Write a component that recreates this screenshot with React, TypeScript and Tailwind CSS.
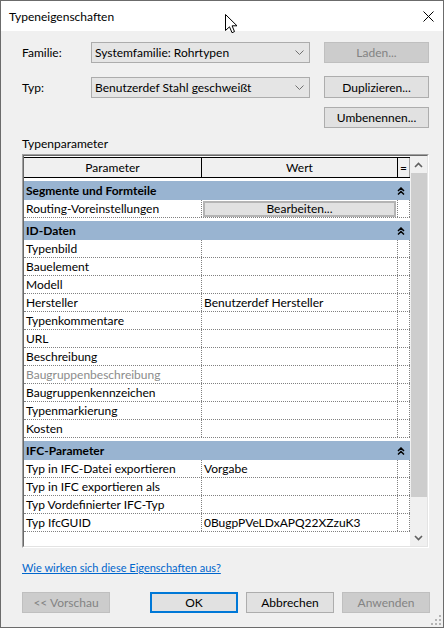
type Row = { name: string; value?: string; muted?: boolean; button?: string };
type Section = { title: string; rows: Row[] };

const sections: Section[] = [
  {
    title: "Segmente und Formteile",
    rows: [{ name: "Routing-Voreinstellungen", button: "Bearbeiten..." }],
  },
  {
    title: "ID-Daten",
    rows: [
      { name: "Typenbild" },
      { name: "Bauelement" },
      { name: "Modell" },
      { name: "Hersteller", value: "Benutzerdef Hersteller" },
      { name: "Typenkommentare" },
      { name: "URL" },
      { name: "Beschreibung" },
      { name: "Baugruppenbeschreibung", muted: true },
      { name: "Baugruppenkennzeichen" },
      { name: "Typenmarkierung" },
      { name: "Kosten" },
    ],
  },
  {
    title: "IFC-Parameter",
    rows: [
      { name: "Typ in IFC-Datei exportieren", value: "Vorgabe" },
      { name: "Typ in IFC exportieren als" },
      { name: "Typ Vordefinierter IFC-Typ" },
      { name: "Typ IfcGUID", value: "0BugpPVeLDxAPQ22XZzuK3" },
    ],
  },
];

function Btn({
  children,
  disabled,
  primary,
  className = "",
}: {
  children: React.ReactNode;
  disabled?: boolean;
  primary?: boolean;
  className?: string;
}) {
  const look = disabled
    ? "bg-[#cccccc] border border-[#bfbfbf] text-[#838383]"
    : primary
      ? "bg-[#e1e1e1] border-2 border-[#0078d7] text-black"
      : "bg-[#e1e1e1] border border-[#adadad] text-black";
  return (
    <div className={`h-[21px] flex items-center justify-center ${look} ${className}`}>{children}</div>
  );
}

function Combo({ text }: { text: string }) {
  return (
    <div className="w-[219px] h-[21px] bg-[#e5e5e5] border border-[#acacac] flex items-center justify-between pl-[3px] pr-[5px]">
      <span>{text}</span>
      <svg width="9" height="5" viewBox="0 0 9 5">
        <path d="M0.5 0.5 L4.5 4.5 L8.5 0.5" fill="none" stroke="#707070" strokeWidth="1" />
      </svg>
    </div>
  );
}

function Collapse() {
  return (
    <svg width="8" height="8" viewBox="0 0 8 8">
      <path d="M1 4 L4 1 L7 4 M1 7.5 L4 4.5 L7 7.5" fill="none" stroke="#000" strokeWidth="1.5" />
    </svg>
  );
}

function Chevron({ up }: { up?: boolean }) {
  return (
    <svg width="9" height="6" viewBox="0 0 9 6">
      <path
        d={up ? "M1 5 L4.5 1.5 L8 5" : "M1 1 L4.5 4.5 L8 1"}
        fill="none"
        stroke="#606060"
        strokeWidth="1.6"
      />
    </svg>
  );
}

function PropRow({ row }: { row: Row }) {
  return (
    <div className="flex h-[18px] border-b border-dotted border-[#808080] bg-white">
      <div
        className={`w-[178px] pl-[2px] flex items-center border-r border-dotted border-[#808080] ${
          row.muted ? "text-[#8c8c8c]" : "text-black"
        }`}
      >
        {row.name}
      </div>
      <div className="w-[196px] flex items-center border-r border-dotted border-[#808080]">
        {row.button ? (
          <div className="w-full h-[16px] mx-[1px] bg-[#e1e1e1] border-2 border-[#b4b4b4] flex items-center justify-center">
            {row.button}
          </div>
        ) : (
          <span className="pl-[2px]">{row.value}</span>
        )}
      </div>
      <div className="w-[12px] border-r border-dotted border-[#808080]" />
    </div>
  );
}

export default function App() {
  return (
    <div className="relative w-[444px] h-[628px] border border-[#6b6b6b] flex flex-col bg-[#f0f0f0] text-[12px] leading-[15px] text-black font-['Lato',sans-serif] overflow-hidden">
      {/* title bar */}
      <div className="h-[30px] bg-white flex items-center justify-between pl-[8px] pr-[9px]">
        <span>Typeneigenschaften</span>
        <svg width="11" height="11" viewBox="0 0 11 11">
          <path d="M0.5 0.5 L10.5 10.5 M10.5 0.5 L0.5 10.5" stroke="#000" strokeWidth="1" />
        </svg>
      </div>

      {/* mouse pointer */}
      <svg className="absolute left-[224px] top-[13px]" width="13" height="20" viewBox="0 0 13 20">
        <path
          d="M0.5 0.5 L0.5 16.5 L4.5 12.8 L7 18.7 L9.5 17.6 L7.1 11.8 L12 11.8 Z"
          fill="#fff"
          stroke="#000"
          strokeWidth="1"
          strokeLinejoin="round"
        />
      </svg>

      <div className="flex-1 flex flex-col pl-[21px]">
        <div className="flex items-center mt-[11px]">
          <span className="w-[69px]">Familie:</span>
          <Combo text="Systemfamilie: Rohrtypen" />
          <Btn disabled className="w-[105px] ml-[14px]">
            Laden...
          </Btn>
        </div>
        <div className="flex items-center mt-[13px]">
          <span className="w-[69px]">Typ:</span>
          <Combo text="Benutzerdef Stahl geschweißt" />
          <Btn className="w-[105px] ml-[14px] h-[22px]">Duplizieren...</Btn>
        </div>
        <div className="flex mt-[9px]">
          <Btn className="w-[105px] ml-[302px]">Umbenennen...</Btn>
        </div>

        <div className="mt-[7px] h-[16px] flex items-center">Typenparameter</div>

        {/* parameter grid */}
        <div className="mt-[3px] w-[407px] h-[394px] border border-t-[#a0a0a0] border-l-[#a0a0a0] border-r-white border-b-white">
          <div className="w-full h-full flex border border-t-[#696969] border-l-[#696969] border-r-[#e3e3e3] border-b-[#e3e3e3] bg-white">
            <div className="w-[386px] flex flex-col">
              <div className="mt-[1px] flex h-[21px] bg-[#f0f0f0] border-y border-black">
                <div className="w-[178px] flex items-center justify-center border-r border-black">Parameter</div>
                <div className="w-[196px] flex items-center justify-center border-r border-black">Wert</div>
                <div className="w-[12px] flex items-center justify-center border-r border-[#a0a0a0]">=</div>
              </div>
              {sections.map((s) => (
                <div key={s.title} className="flex flex-col">
                  <div className="mt-[3px] h-[19px] bg-[#99b4d1] flex items-center justify-between pl-[2px] pr-[5px] font-bold">
                    <span>{s.title}</span>
                    <Collapse />
                  </div>
                  {s.rows.map((r) => (
                    <PropRow key={r.name} row={r} />
                  ))}
                </div>
              ))}
            </div>

            {/* vertical scrollbar */}
            <div className="w-[17px] flex flex-col bg-[#f0f0f0]">
              <div className="h-[17px] flex items-center justify-center">
                <Chevron up />
              </div>
              <div className="ml-[1px] h-[324px] bg-[#cdcdcd]" />
              <div className="flex-1" />
              <div className="h-[17px] flex items-center justify-center">
                <Chevron />
              </div>
            </div>
          </div>
        </div>

        <div className="mt-[11px] h-[16px] flex items-center">
          <span className="text-[11px] text-[#0066cc] underline">Wie wirken sich diese Eigenschaften aus?</span>
        </div>

        <div className="mt-[17px] flex">
          <Btn disabled className="w-[88px]">
            &lt;&lt; Vorschau
          </Btn>
          <Btn primary className="w-[88px] ml-[40px]">
            OK
          </Btn>
          <Btn className="w-[88px] ml-[8px]">Abbrechen</Btn>
          <Btn disabled className="w-[88px] ml-[8px]">
            Anwenden
          </Btn>
        </div>

        {/* size grip */}
        <div className="flex justify-end pr-[2px] mt-[2px]">
          <svg width="10" height="10" viewBox="0 0 10 10">
            <rect x="8" y="0" width="2" height="2" fill="#b4b4b4" />
            <rect x="4" y="4" width="2" height="2" fill="#b4b4b4" />
            <rect x="8" y="4" width="2" height="2" fill="#b4b4b4" />
            <rect x="0" y="8" width="2" height="2" fill="#b4b4b4" />
            <rect x="4" y="8" width="2" height="2" fill="#b4b4b4" />
            <rect x="8" y="8" width="2" height="2" fill="#b4b4b4" />
          </svg>
        </div>
      </div>
    </div>
  );
}
